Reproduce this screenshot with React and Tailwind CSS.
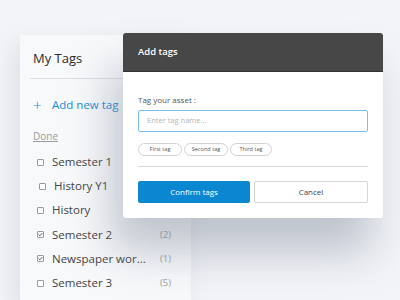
import React from 'react';

const tags = [
    { name: 'Semester 1', count: null, checked: false },
    { name: 'History Y1', count: null, checked: false, nudge: true },
    { name: 'History', count: null, checked: false },
    { name: 'Semester 2', count: 2, checked: true },
    { name: 'Newspaper wor...', count: 1, checked: true },
    { name: 'Semester 3', count: 5, checked: false },
];

const chips = [
    { label: 'First tag', w: 'w-[44px]' },
    { label: 'Second tag', w: 'w-[44px]' },
    { label: 'Third tag', w: 'w-[42px]' },
];

const Checkbox = ({ checked }) => (
    <span className="w-[7px] h-[7px] border border-[#9a9a9a] rounded-[1px] bg-white flex items-center justify-center">
        {checked && (
            <svg width="5" height="5" viewBox="0 0 5 5">
                <path d="M0.6 2.6 L1.9 3.8 L4.4 1" stroke="#444" strokeWidth="0.9" fill="none" />
            </svg>
        )}
    </span>
);

const App = () => {
    return (
        <div
            className="relative w-[400px] h-[300px] overflow-hidden bg-[#f2f4f7]"
            style={{ fontFamily: '"Open Sans", "Noto Sans", sans-serif' }}
        >
            {/* tag sidebar */}
            <div className="ml-[20px] mt-[35px] w-[171px] h-[265px] bg-[#f8f9fb] shadow-[-6px_10px_20px_rgba(160,168,180,0.25)] pl-[10px]">
                <div className="pt-[13px] pl-[3px] text-[13px] text-[#2b2b2b] leading-[20px]">My Tags</div>
                <div className="mt-[10px] h-px bg-[#dcdfe4]" />
                <div className="mt-[18px] pl-[3px] flex items-center text-[#1a8fd6] text-[11.5px] leading-[16px]">
                    <span className="w-[19px] text-[15px] leading-[16px] font-light">+</span>
                    <span>Add new tag</span>
                </div>
                <div className="mt-[16px] pl-[3px] text-[10px] text-[#9a9a9a] underline leading-[14px]">Done</div>
                <div className="mt-[7px] flex flex-col">
                    {tags.map((t) => (
                        <div key={t.name} className="h-[24.2px] flex items-center pr-[20px]">
                            <span className={t.nudge ? 'ml-[9px] mr-[8px]' : 'ml-[7px] mr-[8px]'}>
                                <Checkbox checked={t.checked} />
                            </span>
                            <span className="flex-1 text-[11.5px] text-[#444] leading-[16px]">{t.name}</span>
                            {t.count && <span className="text-[9.5px] text-[#a0a0a0]">({t.count})</span>}
                        </div>
                    ))}
                </div>
            </div>

            {/* add tags dialog */}
            <div className="absolute left-[123px] top-[33px] w-[260px] rounded-[3px] bg-white shadow-[-12px_34px_44px_rgba(110,120,140,0.4)]">
                <div className="h-[39px] bg-[#474747] rounded-t-[3px] border-b border-[#333] flex items-center pl-[15px] text-white text-[9.5px] font-semibold">
                    Add tags
                </div>
                <div className="px-[15px] pt-[23px] pb-[15px]">
                    <div className="text-[8px] text-[#555] leading-[10px]">Tag your asset :</div>
                    <div className="mt-[5px] h-[22px] border border-[#79c0ea] rounded-[2px] flex items-center pl-[8px] text-[7.5px] text-[#b5b5b5]">
                        Enter tag name...
                    </div>
                    <div className="mt-[11px] flex gap-[2px]">
                        {chips.map((c) => (
                            <span key={c.label} className={`${c.w} h-[13px] border border-[#cfd3d8] rounded-full flex items-center justify-center text-[5.6px] text-[#555] leading-none`}>
                                {c.label}
                            </span>
                        ))}
                    </div>
                    <div className="mt-[10px] h-px bg-[#d9dcdf]" />
                    <div className="mt-[14px] flex gap-[4px]">
                        <div className="flex-1 h-[22px] bg-[#0a87d0] rounded-[2px] flex items-center justify-center text-white text-[8px]">
                            Confirm tags
                        </div>
                        <div className="flex-1 h-[22px] bg-white border border-[#d3d6da] rounded-[2px] flex items-center justify-center text-[#444] text-[8px]">
                            Cancel
                        </div>
                    </div>
                </div>
            </div>
        </div>
    );
};

export default App;
